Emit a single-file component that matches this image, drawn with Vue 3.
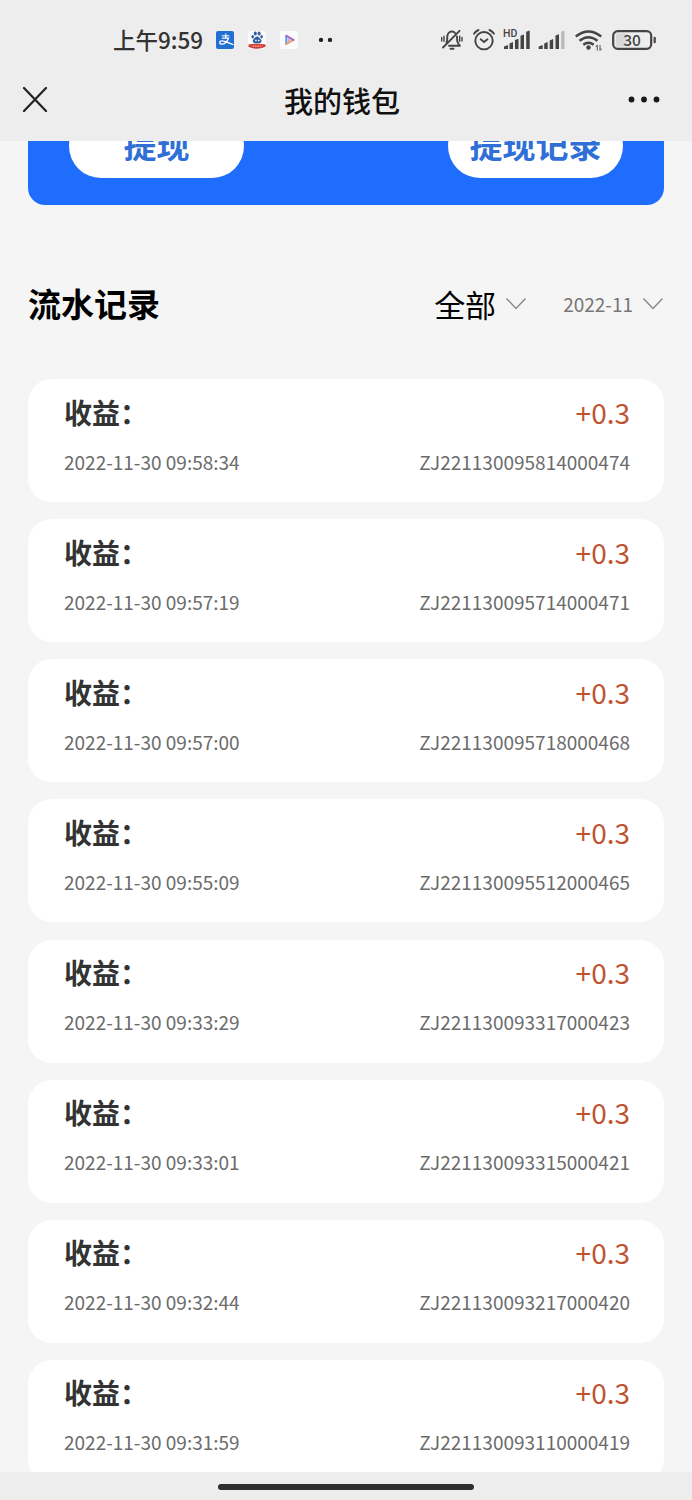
<script setup>
const records = [
  ['2022-11-30 09:58:34', 'ZJ221130095814000474'],
  ['2022-11-30 09:57:19', 'ZJ221130095714000471'],
  ['2022-11-30 09:57:00', 'ZJ221130095718000468'],
  ['2022-11-30 09:55:09', 'ZJ221130095512000465'],
  ['2022-11-30 09:33:29', 'ZJ221130093317000423'],
  ['2022-11-30 09:33:01', 'ZJ221130093315000421'],
  ['2022-11-30 09:32:44', 'ZJ221130093217000420'],
  ['2022-11-30 09:31:59', 'ZJ221130093110000419'],
]
</script>

<template>
  <div class="screen">
    <header class="top">
      <div class="status">
        <span class="time">上午9:59</span>
        <svg class="apps" width="120" height="30" viewBox="0 0 120 30">
          <!-- payment app -->
          <rect x="1" y="6" width="18" height="18" rx="2" fill="#226fd2" />
          <g fill="none" stroke="#fff" stroke-linecap="round">
            <path d="M7 10.800h7M10.800 8.800v2.500" stroke-width="1" />
            <path d="M7.500 13.200h6c-1.300 3.300-4.100 5.900-6.600 5.900-2.800 0-2.800-3.300-.2-3.300 3.300 0 6.300 1.900 11.300 3.700M10.800 11v2" stroke-width="1.300" />
          </g>
          <!-- search app -->
          <rect x="33" y="6" width="18" height="18" rx="3" fill="#fafafa" />
          <g fill="#2e5d9e">
            <ellipse cx="40.300" cy="8.600" rx="1.500" ry="2" />
            <ellipse cx="44.100" cy="8.600" rx="1.500" ry="2" />
            <ellipse cx="37.700" cy="11.800" rx="1.300" ry="1.800" />
            <ellipse cx="46.600" cy="11.800" rx="1.300" ry="1.800" />
            <path d="M42.200 11.400c1.700 0 2.200 1.500 3.400 2.500 1.700 1.700.7 4.300-1.300 4.300H40c-2.100 0-3-2.600-1.300-4.300 1.200-1 1.800-2.500 3.500-2.500z" />
          </g>
          <path d="M40.200 15.500h1.500M43 15.500h1.500" stroke="#fff" stroke-width="1.500" />
          <path d="M33.500 19.500q8.500-1.500 17 0v2.300q-8.500 4-17 0z" fill="#cf3d37" />
          <path d="M37.500 21.200h9.500" stroke="#f1b5ac" stroke-width="1.200" stroke-dasharray="1.600 .8" />
          <!-- video app -->
          <rect x="65" y="6" width="18" height="18" rx="2" fill="#fbfbfb" />
          <path d="M71.200 10.900v8" stroke="#5b9cec" stroke-width="2" stroke-linecap="round" />
          <path d="M71.400 18.900l7-3.900" stroke="#ee9a64" stroke-width="2" stroke-linecap="round" />
          <path d="M71.400 10.900l7 4" stroke="#a16bc5" stroke-width="2" stroke-linecap="round" />
          <path d="M72.500 12.900v4l3.500-2z" fill="#d0a4cc" />
          <circle cx="106" cy="14.900" r="2.200" fill="#222" />
          <circle cx="115" cy="14.900" r="2.200" fill="#222" />
        </svg>
        <svg class="system" width="220" height="30" viewBox="0 0 220 30">
          <!-- muted bell -->
          <g fill="none" stroke="#444" stroke-width="1.900" stroke-linecap="round" stroke-linejoin="round">
            <path d="M6.500 17.500c.8-1.500.8-2.700.8-5.500 0-3.200 1.900-5.500 4.500-5.500 1.400 0 2.500.5 3.300 1.500M17 11.500c0 4.700.2 6 2.900 9.200H9M3 22.500L19.500 5.800" />
            <path d="M10.500 23.700h3" stroke-width="1.900" />
            <path d="M1.700 12.500v3.500M4 11.200v5M19.700 11.200v5M22 12.500v3.500" stroke-width="1.400" />
          </g>
          <!-- alarm clock -->
          <g fill="none" stroke="#444" stroke-width="1.900" stroke-linecap="round">
            <circle cx="44" cy="15.700" r="8.700" />
            <path d="M34 8.800q1.500-2.600 4.500-3.800M54 8.800q-1.500-2.600-4.500-3.800M40.700 14.300l3.300 2.700 3.500-2.700" />
          </g>
          <text x="63" y="12" class="hd">HD</text>
          <!-- signal strength, first and second line -->
          <g fill="#444">
            <path d="M64 24v-2.500l4-1.500v4zM69.500 24v-5.500l3.500-1.500v7zM75 24v-9l3.500-1.200V24zM80.500 24V10.700l3.500-1.200V24zM86.200 24V6.700l3.500-1.200V24z" />
            <path d="M98.700 24v-2.500l4-1.500v4zM104.200 24v-5.500l3.500-1.500v7zM109.700 24v-8.500l3.500-1.500v10zM115.500 24V10.500l3.500-1.300V24z" />
            <path d="M121.200 24V6.700l3.300-1.200V24z" fill="#b9b9b9" />
          </g>
          <!-- wifi -->
          <g fill="none" stroke="#444" stroke-width="2.500">
            <path d="M135.800 11.500q12.700-10 25.400 0M139.500 15.800q9-7 18 0M143.300 19.800q5.200-4 10.400 0" />
          </g>
          <circle cx="148.500" cy="22.500" r="2.200" fill="#444" />
          <path d="M157.300 25.500v-5.500l-1.500 2M160 20v5.500l1.500-2" fill="none" stroke="#555" />
          <!-- battery -->
          <rect x="176" y="8.500" width="11" height="13" rx="1.500" fill="#d8d8d8" />
          <rect x="173.200" y="6.200" width="38" height="17.600" rx="4.500" fill="none" stroke="#444" stroke-width="2.200" />
          <path d="M214.700 12.800v4.400" stroke="#444" stroke-width="2.200" stroke-linecap="round" />
          <text x="192" y="20.900" class="battery">30</text>
        </svg>
      </div>
      <div class="nav">
        <svg width="26" height="26" viewBox="0 0 26 26">
          <path d="M2 2l22 23M24 2L2 25" fill="none" stroke="#222" stroke-width="2.200" stroke-linecap="round" />
        </svg>
        <h1>我的钱包</h1>
        <svg width="32" height="8" viewBox="0 0 32 8">
          <circle cx="3.500" cy="4.500" r="2.900" fill="#191919" />
          <circle cx="16" cy="4.500" r="2.900" fill="#191919" />
          <circle cx="28.500" cy="4.500" r="2.900" fill="#191919" />
        </svg>
      </div>
    </header>

    <main>
      <section class="wallet">
        <button><span>提现</span></button>
        <button><span>提现记录</span></button>
      </section>

      <section class="filters">
        <h2>流水记录</h2>
        <span class="kind">全部</span>
        <svg class="chev" width="22" height="14" viewBox="0 0 22 14">
          <path d="M1.500 1.500L11 11.500l9.500-10" fill="none" stroke="#888" stroke-width="1.400" />
        </svg>
        <span class="month">2022-11</span>
        <svg class="chev" width="22" height="14" viewBox="0 0 22 14">
          <path d="M1.500 1.500L11 11.500l9.500-10" fill="none" stroke="#888" stroke-width="1.400" />
        </svg>
      </section>

      <section class="list">
        <article v-for="[date, id] in records" :key="id">
          <div class="line main-line">
            <strong>收益：</strong>
            <span class="amount">+0.3</span>
          </div>
          <div class="line detail">
            <span>{{ date }}</span>
            <span>{{ id }}</span>
          </div>
        </article>
      </section>
    </main>

    <footer><i></i></footer>
  </div>
</template>

<style>
body { margin: 0; }
</style>

<style scoped>
.screen {
  width: 692px;
  height: 1500px;
  display: flex;
  flex-direction: column;
  overflow: hidden;
  background: #f5f5f5;
  font-family: "Noto Sans CJK SC", sans-serif;
}
.top {
  height: 141px;
  flex: none;
  background: #ededed;
}
.status {
  height: 56px;
  box-sizing: border-box;
  padding: 25px 32px 0 113px;
  display: flex;
}
.time {
  width: 102px;
  font-size: 22.500px;
  line-height: 28px;
  font-weight: 500;
  color: #333;
  white-space: nowrap;
}
.system { margin-left: auto; }
.hd { font: 500 10.500px Roboto, sans-serif; fill: #444; }
.battery { font: 500 15.500px "Noto Sans CJK SC", sans-serif; fill: #444; text-anchor: middle; }
.nav {
  height: 85px;
  box-sizing: border-box;
  padding: 2px 32px 0 22px;
  display: grid;
  grid-template-columns: 46px 1fr 44px;
  align-items: center;
}
.nav > svg { margin-bottom: 1px; }
.nav > svg:last-child { justify-self: end; }
h1 {
  margin: 0;
  text-align: center;
  font-size: 29px;
  line-height: 42px;
  font-weight: 500;
  color: #111;
}
main {
  flex: 1;
  min-height: 0;
  padding: 0 28px;
  overflow: hidden;
}
.wallet {
  height: 64px;
  padding: 0 41px;
  display: flex;
  justify-content: space-between;
  align-items: flex-start;
  overflow: hidden;
  border-radius: 0 0 17px 17px;
  background: #1f6dfd;
}
button {
  width: 175px;
  height: 64px;
  margin-top: -27px;
  padding: 0 0 3px;
  border: 0;
  border-radius: 32px;
  background: #fff;
  color: #2f6fd6;
  font: 700 33px/61px "Noto Sans CJK SC", sans-serif;
  white-space: nowrap;
}
.filters {
  height: 174px;
  display: flex;
  align-items: center;
  padding-top: 24px;
  box-sizing: border-box;
}
h2 {
  margin: 0 auto 3px 0;
  font-size: 33px;
  line-height: 48px;
  font-weight: 700;
  color: #000;
}
.kind { font-size: 31px; line-height: 46px; color: #000; }
.month { margin-left: 36px; font-size: 19px; line-height: 28px; color: #777; }
.chev { margin-left: 9px; }
.list {
  display: flex;
  flex-direction: column;
  gap: 17.150px;
}
article {
  height: 123px;
  flex: none;
  box-sizing: border-box;
  padding: 11.500px 34px 0 36px;
  border-radius: 24px;
  background: #fff;
}
.line { display: flex; justify-content: space-between; white-space: nowrap; }
.main-line { height: 42px; line-height: 42px; }
strong { font-size: 28px; font-weight: 700; color: #333; }
.amount { font-size: 28px; color: #c0532f; }
.detail {
  margin-top: 15px;
  font-size: 19px;
  line-height: 28px;
  color: #6b6b6b;
}
footer {
  height: 28px;
  flex: none;
  display: flex;
  justify-content: center;
  background: #ededed;
}
footer i {
  width: 256px;
  height: 6px;
  margin-top: 12px;
  border-radius: 3px;
  background: #2e2e2e;
}
</style>
